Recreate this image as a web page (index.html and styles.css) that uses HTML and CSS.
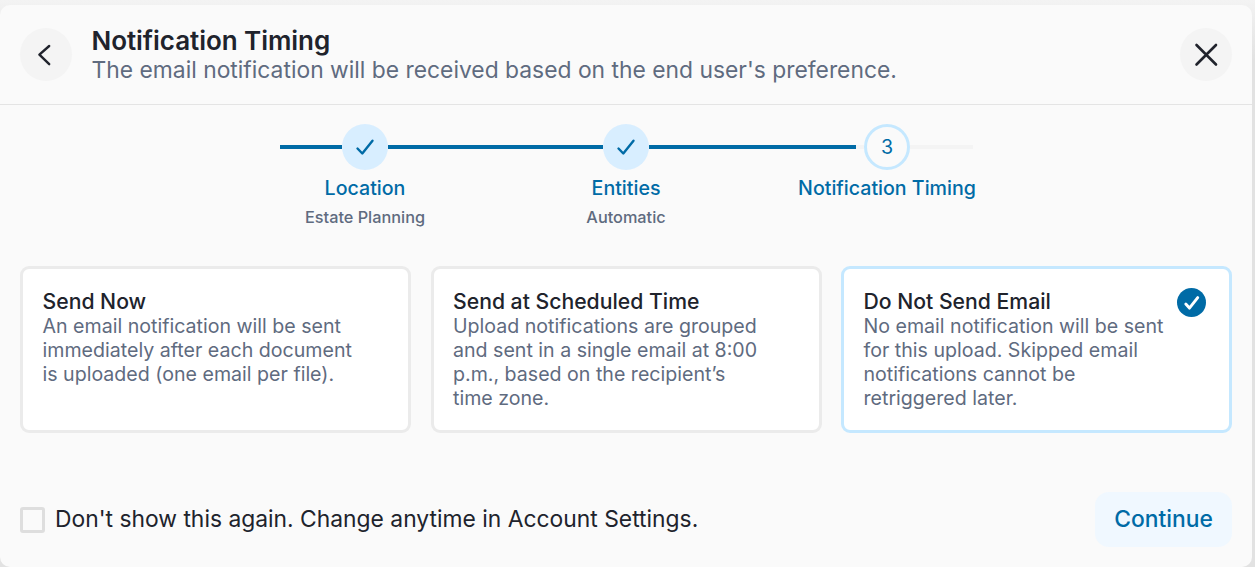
FILE: index.html
```
<!DOCTYPE html>
<html lang="en">
<head>
  <meta charset="UTF-8">
  <title>Notification Timing</title>
  <link rel="stylesheet" href="styles.css">
</head>
<body>

<div class="modal">
  <div class="header">
    <button class="round-btn" aria-label="Back">
      <svg class="icon-back" viewBox="0 0 26 26"><path d="M17.2 4 L7.4 12.6 L17.2 22.2"/></svg>
    </button>
    <div class="heading">
      <h1>Notification Timing</h1>
      <p>The email notification will be received based on the end user's preference.</p>
    </div>
    <button class="round-btn" aria-label="Close">
      <svg class="icon-close" viewBox="0 0 26 26"><path d="M3.5 3 L23 22.5 M23 3 L3.5 22.5"/></svg>
    </button>
  </div>

  <div class="stepper">
    <div class="step">
      <div class="rail first">
        <span class="line"></span>
        <span class="dot done"><svg viewBox="0 0 20 20"><path d="M2.5 11.5 L7.3 16.5 L17.5 3.7"/></svg></span>
        <span class="line"></span>
      </div>
      <div class="label">Location</div>
      <div class="sub">Estate Planning</div>
    </div>
    <div class="step">
      <div class="rail">
        <span class="line"></span>
        <span class="dot done"><svg viewBox="0 0 20 20"><path d="M2.5 11.5 L7.3 16.5 L17.5 3.7"/></svg></span>
        <span class="line"></span>
      </div>
      <div class="label">Entities</div>
      <div class="sub">Automatic</div>
    </div>
    <div class="step">
      <div class="rail last">
        <span class="line"></span>
        <span class="dot">3</span>
        <span class="line todo"></span>
      </div>
      <div class="label">Notification Timing</div>
    </div>
  </div>

  <div class="cards">
    <div class="card">
      <h2>Send Now</h2>
      <p>An email notification will be sent immediately after each document is uploaded (one email per file).</p>
    </div>
    <div class="card">
      <h2>Send at Scheduled Time</h2>
      <p>Upload notifications are grouped and sent in a single email at 8:00 p.m., based on the recipient’s time zone.</p>
    </div>
    <div class="card selected">
      <h2>Do Not Send Email</h2>
      <p>No email notification will be sent for this upload. Skipped email notifications cannot be retriggered later.</p>
      <span class="badge"><svg viewBox="0 0 28 28"><path d="M8.5 15.5 L12 19.4 L20 9.2"/></svg></span>
    </div>
  </div>

  <div class="footer">
    <label class="check"><input type="checkbox"><span>Don't show this again. Change anytime in Account Settings.</span></label>
    <button class="continue">Continue</button>
  </div>
</div>

</body>
</html>
```
FILE: styles.css
```
* { box-sizing: border-box; }
body { margin: 0; padding: 5px 3px 0 0; height: 567px; overflow: hidden; background: linear-gradient(#f3f3f3, #e2e2e2 60px); font-family: Inter, "Liberation Sans", sans-serif; color: #20232c; }
h1, h2, p { margin: 0; }
button { border: 0; padding: 0; font-family: inherit; cursor: pointer; }
svg { display: block; fill: none; stroke: currentColor; stroke-linecap: round; stroke-linejoin: round; }

.modal { height: 562px; background: #fafafa; border-radius: 10px; display: flex; flex-direction: column; }

.header { height: 100px; padding: 0 20px; border-bottom: 1px solid #e4e4e4; display: flex; align-items: center; }
.heading { flex: 1; margin-left: 19.5px; padding-top: 2px; }
.heading h1 { font-size: 26px; line-height: 30px; font-weight: 600; letter-spacing: -0.05px; }
.heading p { font-size: 22.85px; line-height: 29px; color: #5f6b7f; }
.round-btn { width: 52px; height: 53px; border-radius: 50%; background: #f4f4f4; color: #20232c; display: flex; align-items: center; justify-content: center; }
.icon-back { width: 26px; height: 26px; stroke-width: 2.4; margin-right: 3px; }
.icon-close { width: 26px; height: 26px; stroke-width: 2.6; }

.stepper { display: grid; grid-template-columns: repeat(3, 261px); justify-content: center; margin-top: 19px; height: 107px; text-align: center; }
.rail { display: grid; grid-template-columns: 1fr 46px 1fr; align-items: center; height: 46px; }
.line { height: 4px; background: #006ba6; }
.line.todo { background: #f4f4f4; }
.rail.first .line:first-child { margin-left: 45px; }
.rail.last .line:first-child { border-right: 8px solid #f4f4f4; }
.rail.last .line:last-child { margin-right: 45px; }
.dot { width: 46px; height: 46px; border-radius: 50%; border: 3px solid #c5e8ff; color: #006ba6; font-size: 19.6px; display: flex; align-items: center; justify-content: center; }
.dot.done { background: #d8eeff; border: 0; }
.dot svg { width: 20px; height: 20px; stroke-width: 2.4; }
.label { margin-top: 6px; font-size: 19.6px; line-height: 24px; font-weight: 500; color: #006ba6; }
.sub { margin-top: 7px; font-size: 16.3px; line-height: 20px; font-weight: 500; color: #5f6b7f; }

.cards { display: grid; grid-template-columns: repeat(3, 1fr); gap: 19.5px; padding: 0 20px; margin-top: 35px; height: 167px; }
.card { position: relative; background: #fff; border: 3px solid #ebebeb; border-radius: 9px; padding: 20px 50px 0 19.5px; }
.card h2 { font-size: 21.2px; line-height: 25px; font-weight: 500; }
.card p { font-size: 19.6px; line-height: 24px; color: #5f6b7f; }
.card.selected { border-color: #c5e8ff; }
.badge { position: absolute; top: 19px; right: 23px; width: 29px; height: 29px; border-radius: 50%; background: #006ba6; color: #fff; }
.badge svg { stroke-width: 2.8; }

.footer { display: flex; align-items: center; justify-content: space-between; padding: 0 20px; margin-top: auto; margin-bottom: 20px; height: 55px; }
.check { display: flex; align-items: center; gap: 10px; font-size: 22.85px; }
.check span { padding-bottom: 2px; }
.check input { appearance: none; margin: 0; width: 25px; height: 26px; border: 3px solid #dedede; border-radius: 3px; }
.continue { width: 137px; height: 55px; border-radius: 14px; background: #f0f8ff; color: #006ba6; font-size: 22.85px; font-weight: 500; padding-bottom: 2px; }
```
